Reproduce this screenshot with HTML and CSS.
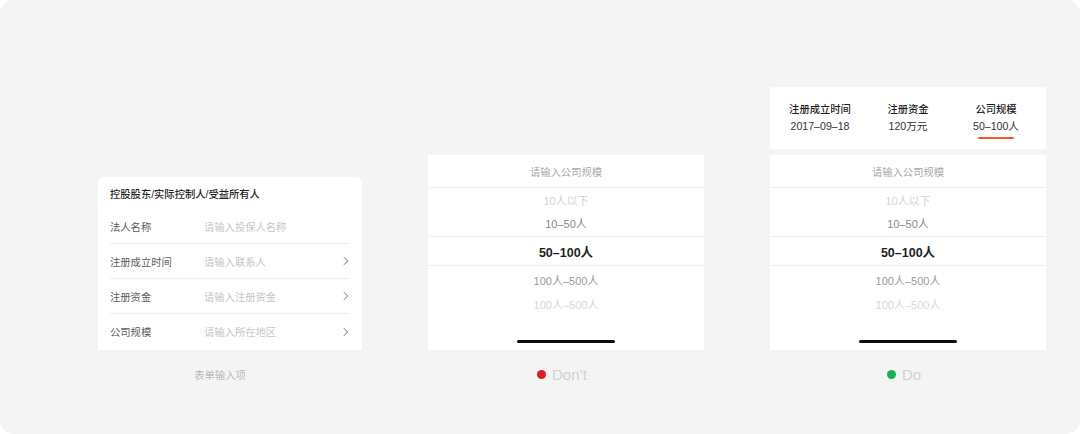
FILE: index.html
```html
<!DOCTYPE html>
<html lang="zh-CN">
<head>
<meta charset="utf-8">
<title>公司规模选择器</title>
<link rel="stylesheet" href="styles.css">
</head>
<body>
<div class="frame">
  <section class="col col-left">
    <div class="form-card">
      <div class="form-title">控股股东/实际控制人/受益所有人</div>
      <div class="form-row">
        <span class="label">法人名称</span>
        <span class="placeholder">请输入投保人名称</span>
      </div>
      <div class="form-row">
        <span class="label">注册成立时间</span>
        <span class="placeholder">请输入联系人</span>
        <svg class="chev" width="6" height="10" viewBox="0 0 6 10"><path d="M1.2 1.5 L4.6 5 L1.2 8.5" fill="none" stroke="#707070" stroke-width="1" stroke-linecap="round" stroke-linejoin="round"/></svg>
      </div>
      <div class="form-row">
        <span class="label">注册资金</span>
        <span class="placeholder">请输入注册资金</span>
        <svg class="chev" width="6" height="10" viewBox="0 0 6 10"><path d="M1.2 1.5 L4.6 5 L1.2 8.5" fill="none" stroke="#707070" stroke-width="1" stroke-linecap="round" stroke-linejoin="round"/></svg>
      </div>
      <div class="form-row last">
        <span class="label">公司规模</span>
        <span class="placeholder">请输入所在地区</span>
        <svg class="chev" width="6" height="10" viewBox="0 0 6 10"><path d="M1.2 1.5 L4.6 5 L1.2 8.5" fill="none" stroke="#707070" stroke-width="1" stroke-linecap="round" stroke-linejoin="round"/></svg>
      </div>
    </div>
    <div class="caption caption-left">表单输入项</div>
  </section>

  <section class="col col-mid">
    <div class="picker">
      <div class="picker-head">请输入公司规模</div>
      <div class="opt opt-1">10人以下</div>
      <div class="opt opt-2">10–50人</div>
      <div class="opt opt-sel">50–100人</div>
      <div class="opt opt-4">100人–500人</div>
      <div class="opt opt-5">100人–500人</div>
      <div class="home-bar"></div>
    </div>
    <div class="caption verdict"><span class="dot dot-red"></span><span>Don’t</span></div>
  </section>

  <section class="col col-right">
    <div class="summary">
      <div class="sum-item">
        <div class="sum-label">注册成立时间</div>
        <div class="sum-value">2017–09–18</div>
      </div>
      <div class="sum-item">
        <div class="sum-label">注册资金</div>
        <div class="sum-value">120万元</div>
      </div>
      <div class="sum-item active">
        <div class="sum-label">公司规模</div>
        <div class="sum-value">50–100人</div>
        <div class="underline"></div>
      </div>
    </div>
    <div class="picker">
      <div class="picker-head">请输入公司规模</div>
      <div class="opt opt-1">10人以下</div>
      <div class="opt opt-2">10–50人</div>
      <div class="opt opt-sel">50–100人</div>
      <div class="opt opt-4">100人–500人</div>
      <div class="opt opt-5">100人–500人</div>
      <div class="home-bar"></div>
    </div>
    <div class="caption verdict"><span class="dot dot-green"></span><span>Do</span></div>
  </section>
</div>
</body>
</html>
```

FILE: styles.css
```css
* { box-sizing: border-box; }
html, body {
  margin: 0;
  padding: 0;
  background: #ffffff;
}
body {
  font-family: "Liberation Sans", "Noto Sans CJK SC", sans-serif;
  color: #222;
}
.frame {
  width: 1080px;
  height: 434px;
  background: #f4f4f4;
  border-radius: 14px;
  display: flex;
  gap: 66px;
  padding: 0 34px 0 98px;
}
.col {
  display: flex;
  flex-direction: column;
  justify-content: flex-end;
  padding-bottom: 50px;
}
.col-left { width: 264px; }
.col-mid, .col-right { width: 276px; }

/* left form card */
.form-card {
  background: #fff;
  border-radius: 6px 6px 0 0;
  height: 173px;
  padding: 0 12px;
}
.form-title {
  height: 32px;
  padding-top: 10px;
  font-size: 10.3px;
  line-height: 16px;
  font-weight: 500;
  color: #1f1f1f;
}
.form-row {
  height: 35px;
  display: flex;
  align-items: center;
  border-bottom: 1px solid #efefef;
  font-size: 10.3px;
}
.form-row.last { border-bottom: none; }
.label {
  width: 94px;
  color: #5c5c5c;
}
.placeholder {
  flex: 1;
  color: #c6c6c6;
}
.chev { margin-right: 1px; }

/* captions */
.caption {
  margin-top: 14px;
  height: 20px;
  display: flex;
  align-items: center;
  justify-content: center;
}
.caption-left {
  font-size: 10.3px;
  color: #b9b9b9;
  padding-right: 20px;
}
.verdict {
  font-size: 15px;
  color: #d2d2d2;
  gap: 6px;
  padding-right: 8px;
}
.dot {
  width: 9px;
  height: 9px;
  border-radius: 50%;
  display: inline-block;
}
.dot-red { background: #e01b1b; }
.dot-green { background: #10b553; }

/* picker */
.picker {
  background: #fff;
  height: 195px;
  display: flex;
  flex-direction: column;
  align-items: stretch;
}
.picker-head {
  height: 33px;
  border-bottom: 1px solid #efefef;
  font-size: 10.3px;
  color: #a8a8a8;
  display: flex;
  align-items: center;
  justify-content: center;
  padding-top: 1px;
}
.opt {
  display: flex;
  align-items: center;
  justify-content: center;
  font-size: 11px;
}
.opt-1 { height: 23px; color: #d4d4d4; padding-top: 1px; }
.opt-2 { height: 25px; color: #8a8a8a; padding-bottom: 2px; }
.opt-sel {
  height: 30px;
  border-top: 1px solid #efefef;
  border-bottom: 1px solid #efefef;
  font-size: 12.5px;
  font-weight: 700;
  color: #1f1f1f;
}
.opt-4 { height: 28px; color: #9a9a9a; }
.opt-5 { height: 20px; color: #d8d8d8; }
.home-bar {
  width: 98px;
  height: 3px;
  border-radius: 2px;
  background: #0d0d0d;
  align-self: center;
  margin-top: 26px;
}

/* summary card */
.summary {
  background: #fff;
  height: 62px;
  margin-bottom: 6px;
  padding: 16px 6px 0;
  display: grid;
  grid-template-columns: 1fr 1fr 1fr;
}
.sum-item {
  display: flex;
  flex-direction: column;
  align-items: center;
}
.sum-label {
  font-size: 10.3px;
  line-height: 14px;
  font-weight: 500;
  color: #1f1f1f;
}
.sum-value {
  margin-top: 1px;
  font-size: 10.6px;
  line-height: 16px;
  color: #333;
}
.underline {
  margin-top: 3px;
  width: 36px;
  height: 2px;
  border-radius: 1px;
  background: #f25a23;
}
```
